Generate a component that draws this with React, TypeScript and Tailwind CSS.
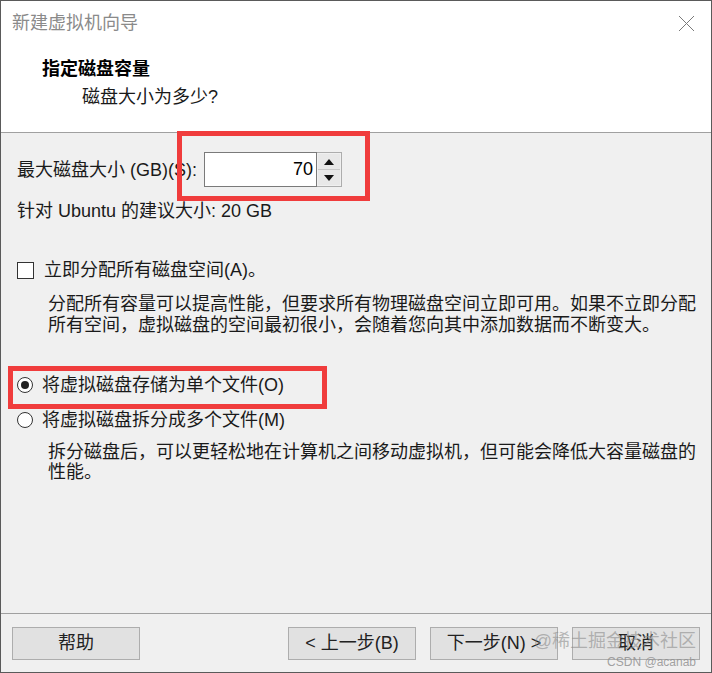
import React from 'react';

const font = { fontFamily: '"Liberation Sans", "Noto Sans CJK SC", sans-serif' };

const WizardButton = ({ label }: { label: string }) => (
  <button className="h-[33px] w-[128px] border border-[#adadad] bg-[#e1e1e1] text-[18px] text-[#222]">
    {label}
  </button>
);

const App = () => {
  return (
    <div
      className="flex h-[673px] w-[712px] flex-col border border-[#5a5a5a] bg-[#f0f0f0] text-[18px] text-[#1a1a1a]"
      style={font}
    >
      {/* header */}
      <div className="h-[132px] border-b border-[#a0a0a0] bg-white">
        <div className="flex items-start justify-between pl-[11px] pr-[16px] pt-[10px]">
          <span className="leading-[24px] text-[#8a8a8a]">新建虚拟机向导</span>
          <svg width="17" height="17" viewBox="0 0 17 17" className="mt-[4px]">
            <path d="M1 1 L16 16 M16 1 L1 16" stroke="#7a7a7a" strokeWidth="1" />
          </svg>
        </div>
        <div className="mt-[22px] pl-[41px] font-bold leading-[24px] text-black">指定磁盘容量</div>
        <div className="mt-[4px] pl-[81px] leading-[24px]">磁盘大小为多少?</div>
      </div>

      {/* body */}
      <div className="flex-1 px-[16px]">
        <div className="mt-[19px] flex items-center">
          <span className="w-[187px] whitespace-nowrap leading-[24px]">最大磁盘大小 (GB)(S):</span>
          <div className="relative flex h-[35px]">
            <div className="flex w-[113px] items-center justify-end border border-[#7a7a7a] bg-white pr-[3px] text-black">
              70
            </div>
            <div className="flex w-[25px] flex-col border-y border-r border-[#adadad] bg-[#f0f0f0] p-[1px]">
              <div className="flex flex-1 items-center justify-center border-b border-[#c8c8c8] bg-[#e8e8e8]">
                <svg width="10" height="6" viewBox="0 0 10 6"><path d="M5 0 L10 6 L0 6 Z" fill="#111" /></svg>
              </div>
              <div className="flex flex-1 items-center justify-center bg-[#e8e8e8]">
                <svg width="10" height="6" viewBox="0 0 10 6"><path d="M0 0 L10 0 L5 6 Z" fill="#111" /></svg>
              </div>
            </div>
            <div className="absolute -bottom-[14px] -left-[27px] -right-[28px] -top-[21px] border-[5px] border-[#f03c3c]" />
          </div>
        </div>

        <div className="mt-[12px] leading-[24px]">针对 Ubuntu 的建议大小: 20 GB</div>

        <div className="mt-[35px] flex items-center gap-[10px] leading-[24px]">
          <div className="h-[17px] w-[17px] border border-[#333] bg-white" />
          <span>立即分配所有磁盘空间(A)。</span>
        </div>
        <div className="mt-[12px] whitespace-nowrap pl-[31px] leading-[21px]">
          <div>分配所有容量可以提高性能，但要求所有物理磁盘空间立即可用。如果不立即分配</div>
          <div>所有空间，虚拟磁盘的空间最初很小，会随着您向其中添加数据而不断变大。</div>
        </div>

        <div className="relative mt-[37px] flex items-center gap-[9px] leading-[24px]">
          <div className="flex h-[16px] w-[16px] items-center justify-center rounded-full border border-[#333] bg-white">
            <div className="h-[8px] w-[8px] rounded-full bg-[#222]" />
          </div>
          <span>将虚拟磁盘存储为单个文件(O)</span>
          <div className="absolute -bottom-[12px] -left-[9px] -top-[7px] w-[319px] border-[5px] border-[#f03c3c]" />
        </div>
        <div className="mt-[11px] flex items-center gap-[9px] leading-[24px]">
          <div className="h-[16px] w-[16px] rounded-full border border-[#333] bg-white" />
          <span>将虚拟磁盘拆分成多个文件(M)</span>
        </div>
        <div className="mt-[10px] whitespace-nowrap pl-[31px] leading-[20px]">
          <div>拆分磁盘后，可以更轻松地在计算机之间移动虚拟机，但可能会降低大容量磁盘的</div>
          <div>性能。</div>
        </div>
      </div>

      {/* footer */}
      <div className="relative h-[59px] border-t border-[#a0a0a0] px-[11px] pt-[13px]">
        <div className="flex justify-between">
          <WizardButton label="帮助" />
          <div className="flex gap-[14px]">
            <WizardButton label="< 上一步(B)" />
            <WizardButton label="下一步(N) >" />
            <WizardButton label="取消" />
          </div>
        </div>
        <div className="pointer-events-none absolute right-[15px] top-[15px] text-[18px] leading-[24px] text-[#8c8c8c]/60">
          @稀土掘金技术社区
        </div>
        <div className="pointer-events-none absolute bottom-[3px] right-[15px] text-[12px] leading-[14px] text-[#8c8c8c]/80">
          CSDN @acanab
        </div>
      </div>
    </div>
  );
};

export default App;
